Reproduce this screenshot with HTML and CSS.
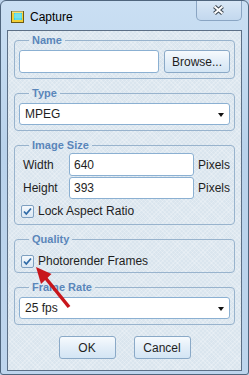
FILE: index.html
```html
<!DOCTYPE html>
<html lang="en">
<head>
  <meta charset="UTF-8">
  <title>Capture</title>
  <link rel="stylesheet" href="styles.css">
</head>
<body>

  <div class="window">
    <div class="titlebar">
      <svg class="app-icon" width="13" height="12" viewBox="0 0 13 12">
        <rect x="0.5" y="0.5" width="12" height="11" fill="#f2cf35" stroke="#6b5a14"/>
        <rect x="3" y="2" width="8" height="7" fill="#3fcfe0"/>
        <path d="M3 4h8M3 6h8M5 2v7M7 2v7M9 2v7" stroke="#9ff0f6" stroke-width="0.7"/>
        <path d="M1 1h11" stroke="#fff6b0"/>
      </svg>
      <span class="title">Capture</span>
      <div class="close">
        <svg width="13" height="12" viewBox="0 0 13 12">
          <path d="M2.5 2.5L10.5 9.5M10.5 2.5L2.5 9.5" stroke="#3c4650" stroke-width="4.2"/>
          <path d="M2.5 2.5L10.5 9.5M10.5 2.5L2.5 9.5" stroke="#ffffff" stroke-width="2"/>
        </svg>
      </div>
    </div>

    <div class="client">

      <fieldset class="group">
        <legend>Name</legend>
        <div class="name-row">
          <input class="field" type="text">
          <button class="btn">Browse...</button>
        </div>
      </fieldset>

      <fieldset class="group">
        <legend>Type</legend>
        <div class="select">MPEG<span class="caret"></span></div>
      </fieldset>

      <fieldset class="group group-size">
        <legend>Image Size</legend>
        <div class="size-grid">
          <span class="size-label">Width</span>
          <input class="field" type="text" value="640">
          <span class="unit">Pixels</span>
          <span class="size-label">Height</span>
          <input class="field" type="text" value="393">
          <span class="unit">Pixels</span>
        </div>
        <label class="check">
          <span class="box">
            <svg width="11" height="11" viewBox="0 0 11 11"><path d="M2 5.5L4.3 8L9 2.5" fill="none" stroke="#2f6aa6" stroke-width="1.8"/></svg>
          </span>
          Lock Aspect Ratio
        </label>
      </fieldset>

      <fieldset class="group group-quality">
        <legend>Quality</legend>
        <label class="check">
          <span class="box">
            <svg width="11" height="11" viewBox="0 0 11 11"><path d="M2 5.5L4.3 8L9 2.5" fill="none" stroke="#2f6aa6" stroke-width="1.8"/></svg>
          </span>
          Photorender Frames
        </label>
      </fieldset>

      <fieldset class="group">
        <legend>Frame Rate</legend>
        <div class="select">25 fps<span class="caret"></span></div>
      </fieldset>

      <div class="actions">
        <button class="btn btn-action">OK</button>
        <button class="btn btn-action">Cancel</button>
      </div>

    </div>

    <!-- freccia rossa sopra il checkbox -->
    <svg class="arrow" width="44" height="50" viewBox="0 0 44 50">
      <path d="M13 15L38 46" stroke="#c8161c" stroke-width="3.5"/>
      <path d="M5 6L20.5 13L10 23Z" fill="#c8161c"/>
    </svg>
  </div>

</body>
</html>
```

FILE: styles.css
```css
body {
  margin: 0;
  font-family: "Liberation Sans", Arial, sans-serif;
  font-size: 12px;
  color: #1e1e1e;
  background-color: #bcd3eb;
}

.window {
  position: relative;
  box-sizing: border-box;
  width: 249px;
  height: 375px;
  display: flex;
  flex-direction: column;
  padding: 0 6px 3px;
  border: 1px solid #4f657d;
  border-radius: 6px 6px 3px 3px;
  background: linear-gradient(#cadff3, #b9d2eb 40%, #bed5ed);
}

.titlebar {
  height: 29px;
  display: flex;
  align-items: flex-start;
  padding-left: 4px;
}

.app-icon {
  margin-top: 10px;
}

.title {
  margin: 8px 0 0 6px;
  line-height: 16px;
  color: #000;
}

.close {
  margin-left: auto;
  box-sizing: border-box;
  width: 46px;
  height: 20px;
  display: flex;
  align-items: center;
  justify-content: center;
  padding: 0 1px 1px 0;
  border: 1px solid #8aa5c3;
  border-top: none;
  border-radius: 0 0 5px 5px;
  background: linear-gradient(#d8e7f6, #c3d8ee);
}

.client {
  flex: 1;
  display: flex;
  flex-direction: column;
  gap: 7px;
  padding: 2px 6px 0;
  border: 1px solid #5c6f86;
  background-color: #dae5ee;
  background-image:
    repeating-linear-gradient(45deg, rgba(255,255,255,0.22) 0 1px, transparent 1px 3px),
    repeating-linear-gradient(-45deg, rgba(255,255,255,0.22) 0 1px, transparent 1px 3px);
}

.group {
  margin: 0;
  min-width: 0;
  padding: 3px 4px 5px;
  border: 1px solid #98b3cd;
  border-radius: 4px;
}

.group legend {
  margin-left: 10px;
  padding: 0 3px;
  font-size: 11px;
  font-weight: bold;
  line-height: 14px;
  color: #5a86ba;
}

.group-size {
  padding-top: 1px;
}

.group-quality {
  padding-top: 7px;
  padding-bottom: 3px;
}

.field {
  box-sizing: border-box;
  height: 23px;
  padding: 0 4px;
  border: 1px solid #8bb0d2;
  border-radius: 3px;
  background: #fff;
  font-family: inherit;
  font-size: 12px;
  color: #1e1e1e;
  outline: none;
}

.name-row {
  display: flex;
  gap: 5px;
}

.name-row .field {
  width: 140px;
}

.btn {
  box-sizing: border-box;
  height: 23px;
  padding: 0;
  border: 1px solid #8aa9c7;
  border-radius: 3px;
  background: linear-gradient(#f6fafd, #e3eef8 50%, #d3e5f4);
  font-family: inherit;
  font-size: 12px;
  color: #1e1e1e;
}

.name-row .btn {
  flex: 1;
}

.select {
  position: relative;
  box-sizing: border-box;
  height: 22px;
  display: flex;
  align-items: center;
  padding-left: 5px;
  border: 1px solid #8bb0d2;
  border-radius: 3px;
  background: #fff;
}

.caret {
  position: absolute;
  right: 5px;
  top: 9px;
  border-left: 3px solid transparent;
  border-right: 3px solid transparent;
  border-top: 4px solid #111;
}

.size-grid {
  display: grid;
  grid-template-columns: 50px 125px 1fr;
  row-gap: 1px;
  align-items: center;
}

.size-grid .field {
  width: 125px;
}

.size-grid .field:nth-of-type(2) {
  height: 22px;
}

.size-label {
  padding-left: 4px;
}

.unit {
  padding-left: 4px;
}

.check {
  display: flex;
  align-items: center;
  height: 16px;
  margin-top: 4px;
}

.group-quality .check {
  margin-top: 0;
}

.box {
  box-sizing: border-box;
  width: 13px;
  height: 13px;
  margin: 0 4px 0 2px;
  display: flex;
  align-items: center;
  justify-content: center;
  border: 1px solid #7d9fc0;
  border-radius: 2px;
  background: linear-gradient(#f4f8fc, #dbe8f4);
}

.actions {
  display: flex;
  justify-content: center;
  gap: 18px;
  margin-top: 4px;
}

.btn-action {
  width: 57px;
}

.arrow {
  position: absolute;
  left: 30px;
  top: 260px;
}
```
